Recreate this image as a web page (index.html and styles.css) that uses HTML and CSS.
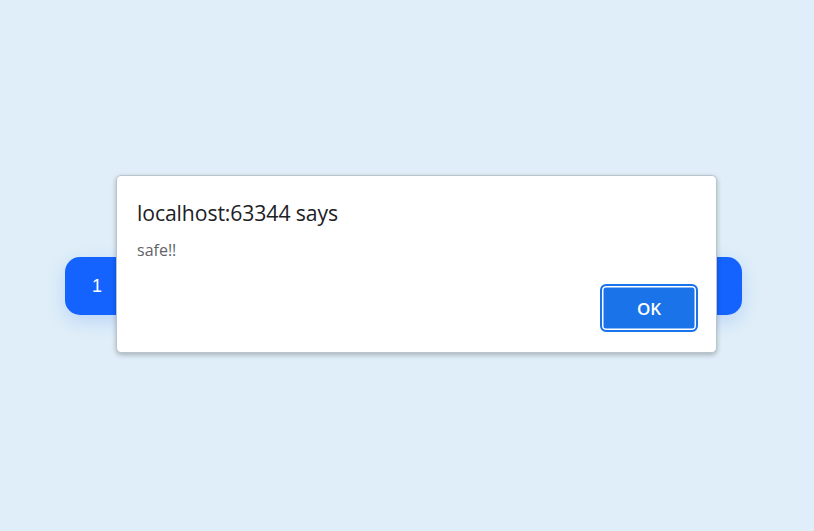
FILE: index.html
```html
<!DOCTYPE html>
<html>
<head>
<meta charset="utf-8">
<link rel="stylesheet" href="styles.css">
</head>
<body>
<main class="page">
  <div class="bar"><span class="num">1</span></div>
</main>
<div class="dialog" role="alertdialog">
  <div class="title">localhost:63344 says</div>
  <div class="msg">safe!!</div>
  <div class="actions"><button class="ok">OK</button></div>
</div>
</body>
</html>
```
FILE: styles.css
```css
html, body {
  margin: 0;
  padding: 0;
  width: 814px;
  height: 531px;
  overflow: hidden;
}
body {
  background: #dfeef8;
  font-family: "Open Sans", "Noto Sans", "Liberation Sans", sans-serif;
  position: relative;
}
.page {
  padding: 257px 72px 0 65px;
}
.bar {
  height: 58px;
  background: #1463ff;
  border-radius: 15px;
  box-shadow: 0 6px 18px rgba(20, 99, 255, 0.18);
  display: flex;
  align-items: center;
  padding-left: 27px;
}
.num {
  color: #ffffff;
  font-family: "Liberation Sans", Arial, sans-serif;
  font-size: 18px;
}
.dialog {
  position: absolute;
  left: 116px;
  top: 175px;
  width: 599px;
  height: 176px;
  background: #ffffff;
  border: 1px solid #b9c4cc;
  border-radius: 5px;
  box-shadow: 0 2px 5px rgba(0, 0, 0, 0.25);
  display: flex;
  flex-direction: column;
}
.title {
  margin: 24px 0 0 20px;
  font-size: 21.2px;
  color: #202124;
  line-height: 26px;
  letter-spacing: -0.1px;
}
.msg {
  margin: 13px 0 0 20px;
  font-size: 16px;
  color: #5f6368;
  line-height: 22px;
}
.actions {
  display: flex;
  justify-content: flex-end;
  padding: 0 18px 0 0;
  margin-top: 23px;
  flex-shrink: 0;
}
.ok {
  width: 98px;
  height: 48px;
  flex-shrink: 0;
  box-sizing: border-box;
  background: #1a73e8;
  color: #ffffff;
  border: 2.5px solid #1a73e8;
  box-shadow: inset 0 0 0 1.5px #ffffff;
  border-radius: 6px;
  font-family: "Open Sans", "Noto Sans", sans-serif;
  font-size: 17px;
  font-weight: 600;
  padding: 0;
}
```
